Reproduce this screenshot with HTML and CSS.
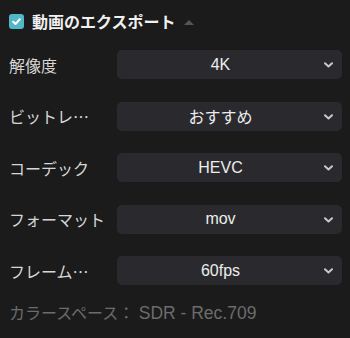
FILE: index.html
```html
<!DOCTYPE html>
<html lang="ja">
<head>
<meta charset="utf-8">
<link rel="stylesheet" href="styles.css">
</head>
<body>
<div class="panel">
  <div class="header">
    <span class="check">
      <svg width="15" height="15" viewBox="0 0 15 15"><path d="M4.2 7.8 L6.5 10 L10.8 5.3" fill="none" stroke="#fff" stroke-width="2" stroke-linecap="round" stroke-linejoin="round"/></svg>
    </span>
    <span class="title">動画のエクスポート</span>
    <span class="caret"></span>
  </div>
  <div class="rows">
    <div class="row"><span class="label">解像度</span><div class="select"><span class="value">4K</span><svg class="chev" width="9" height="6" viewBox="0 0 9 6"><path d="M1 1.2 L4.5 4.5 L8 1.2" fill="none" stroke="#c8c8c8" stroke-width="2" stroke-linecap="round" stroke-linejoin="round"/></svg></div></div>
    <div class="row"><span class="label">ビットレ…</span><div class="select"><span class="value">おすすめ</span><svg class="chev" width="9" height="6" viewBox="0 0 9 6"><path d="M1 1.2 L4.5 4.5 L8 1.2" fill="none" stroke="#c8c8c8" stroke-width="2" stroke-linecap="round" stroke-linejoin="round"/></svg></div></div>
    <div class="row"><span class="label">コーデック</span><div class="select"><span class="value">HEVC</span><svg class="chev" width="9" height="6" viewBox="0 0 9 6"><path d="M1 1.2 L4.5 4.5 L8 1.2" fill="none" stroke="#c8c8c8" stroke-width="2" stroke-linecap="round" stroke-linejoin="round"/></svg></div></div>
    <div class="row"><span class="label">フォーマット</span><div class="select"><span class="value">mov</span><svg class="chev" width="9" height="6" viewBox="0 0 9 6"><path d="M1 1.2 L4.5 4.5 L8 1.2" fill="none" stroke="#c8c8c8" stroke-width="2" stroke-linecap="round" stroke-linejoin="round"/></svg></div></div>
    <div class="row"><span class="label">フレーム…</span><div class="select"><span class="value">60fps</span><svg class="chev" width="9" height="6" viewBox="0 0 9 6"><path d="M1 1.2 L4.5 4.5 L8 1.2" fill="none" stroke="#c8c8c8" stroke-width="2" stroke-linecap="round" stroke-linejoin="round"/></svg></div></div>
  </div>
  <div class="footer">カラースペース： <span class="space">SDR - Rec.709</span></div>
</div>
</body>
</html>
```
FILE: styles.css
```css
html, body {
  margin: 0;
  padding: 0;
  background: #1b1b1b;
}
body {
  font-family: "Liberation Sans", "Noto Sans CJK JP", sans-serif;
  color: #dcdcdc;
  width: 350px;
  height: 338px;
  overflow: hidden;
}
.panel {
  padding: 14px 8px 0 9px;
}
.header {
  display: flex;
  align-items: center;
  height: 15px;
}
.check {
  width: 15px;
  height: 15px;
  border-radius: 3px;
  background: #52b8c8;
  display: flex;
}
.title {
  margin-left: 8px;
  font-size: 16px;
  font-weight: bold;
  color: #f0f0f0;
  line-height: 15px;
  font-family: "Noto Sans CJK JP", sans-serif;
}
.caret {
  margin-left: 8px;
  width: 0;
  height: 0;
  border-left: 5px solid transparent;
  border-right: 5px solid transparent;
  border-bottom: 5px solid #555;
  margin-top: 1px;
}
.rows {
  margin-top: 21px;
  display: flex;
  flex-direction: column;
  gap: 22.5px;
}
.row {
  display: flex;
  align-items: center;
  height: 29px;
}
.label {
  width: 108px;
  flex: none;
  font-size: 16px;
  color: #d6d6d6;
  font-family: "Noto Sans CJK JP", sans-serif;
  white-space: nowrap;
}
.select {
  flex: 1;
  height: 29px;
  background: #2a2a2e;
  border-radius: 5px;
  display: flex;
  align-items: center;
  padding-right: 9px;
}
.value {
  flex: 1;
  text-align: center;
  font-size: 16px;
  color: #ededed;
}
.chev {
  flex: none;
  margin-top: 1px;
}
.footer {
  margin-top: 17px;
  font-size: 16px;
  line-height: 22px;
  color: #6c6c6c;
  font-family: "Liberation Sans", "Noto Sans CJK JP", sans-serif;
  white-space: nowrap;
}
.space {
  font-size: 17.5px;
}
```
